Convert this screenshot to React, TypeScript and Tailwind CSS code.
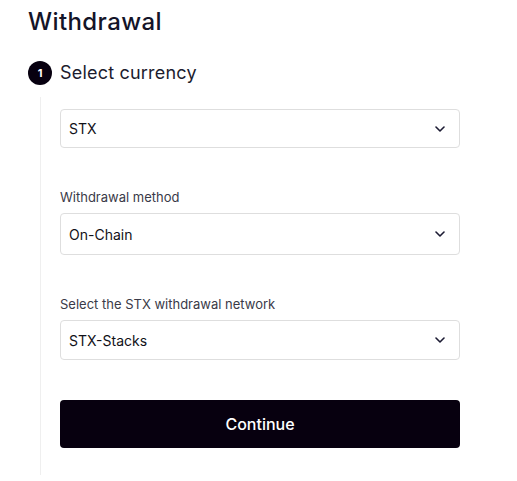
const fields = [
  { label: null as string | null, value: "STX", height: "h-[39px]" },
  { label: "Withdrawal method", value: "On-Chain", height: "h-[42px]" },
  { label: "Select the STX withdrawal network", value: "STX-Stacks", height: "h-[40px]" },
];

function Chevron() {
  return (
    <svg width="10" height="6" viewBox="0 0 10 6" fill="none" className="shrink-0">
      <path d="M1 1l4 4 4-4" stroke="#1c1b33" strokeWidth="1.6" strokeLinecap="round" strokeLinejoin="round" />
    </svg>
  );
}

export default function App() {
  return (
    <div className="min-h-screen bg-white pl-7 pr-[57px] pt-[6px] font-['Inter',sans-serif] text-[#141428]">
      <h1 className="text-[24px] leading-[32px] font-medium tracking-[0.4px]">Withdrawal</h1>

      <div className="mt-[23px] flex items-center gap-2">
        <span className="flex h-6 w-6 items-center justify-center rounded-full bg-[#07000f] text-[11px] font-bold text-white">
          1
        </span>
        <span className="text-[18px] leading-6 tracking-[0.2px] text-[#1c1c2e]">Select currency</span>
      </div>

      <div className="ml-3 mt-3 border-l border-[#efefef] pl-[19px] pt-3 pb-[27px]">
        {fields.map((f, i) => (
          <div key={f.value} className={i === 0 ? "" : "mt-[39px]"}>
            {f.label && (
              <div className="mb-[6px] text-[13px] leading-5 text-[#3a3a48]">{f.label}</div>
            )}
            <div
              className={`flex ${f.height} items-center justify-between rounded-[4px] border border-[#dedede] pl-2 pr-[14px] text-[14px] text-[#111118]`}
            >
              <span>{f.value}</span>
              <Chevron />
            </div>
          </div>
        ))}

        <button className="mt-10 flex h-12 w-full items-center justify-center rounded-[4px] bg-[#07000f] text-[16px] font-medium text-white">
          Continue
        </button>
      </div>
    </div>
  );
}
